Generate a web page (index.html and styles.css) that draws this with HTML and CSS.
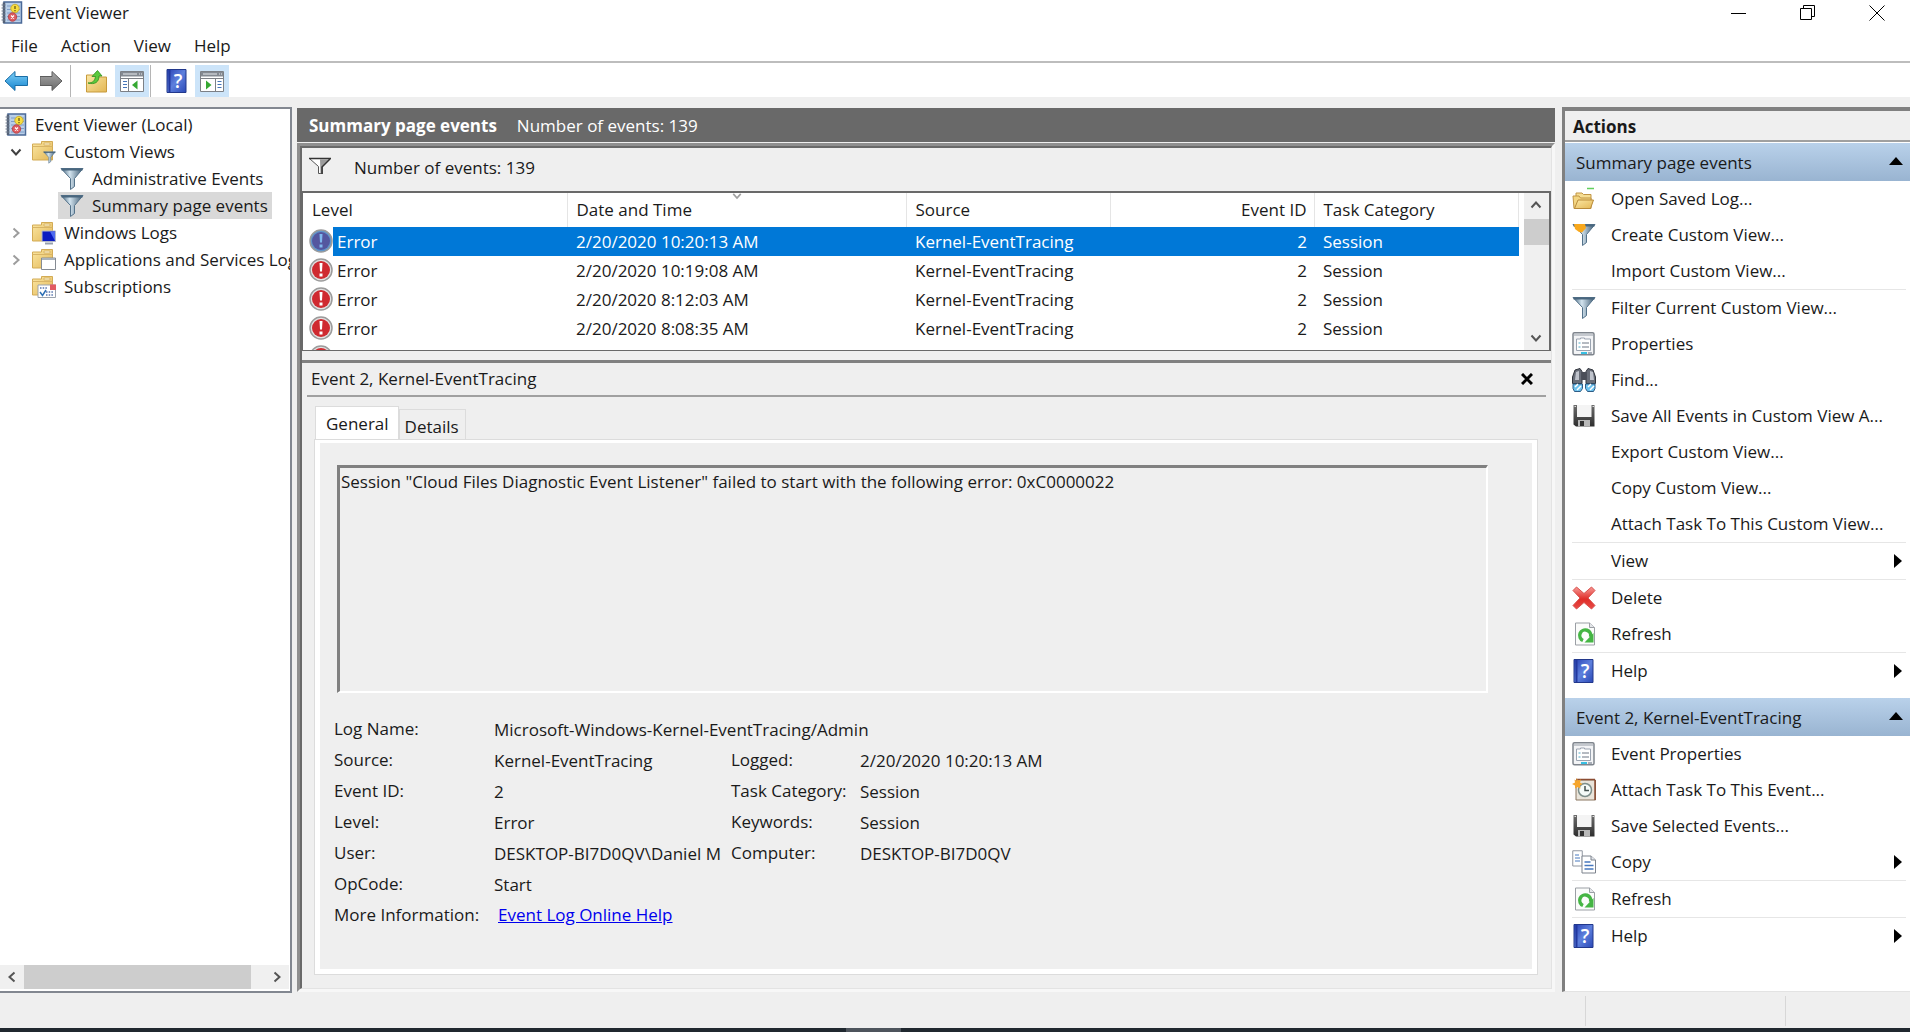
FILE: index.html
```html
<!DOCTYPE html>
<html lang="en">
<head>
    <meta charset="UTF-8">
    <meta name="viewport" content="width=device-width, initial-scale=1.0">
    <title>Event Viewer</title>
    <link rel="stylesheet" href="styles.css">
</head>
<body>
    <!-- icon sprite -->
    <svg class="sprite" aria-hidden="true">
        <defs>
            <linearGradient id="gFunnel" x1="0" y1="0" x2="1" y2="0">
                <stop offset="0" stop-color="#3f5f78"/><stop offset=".4" stop-color="#d3e4ef"/><stop offset="1" stop-color="#3b5870"/>
            </linearGradient>
            <linearGradient id="gBlue" x1="0" y1="0" x2="0" y2="1">
                <stop offset="0" stop-color="#7fd0f7"/><stop offset="1" stop-color="#1484cf"/>
            </linearGradient>
            <linearGradient id="gGray" x1="0" y1="0" x2="0" y2="1">
                <stop offset="0" stop-color="#a8a8a8"/><stop offset="1" stop-color="#6a6a6a"/>
            </linearGradient>
            <linearGradient id="gFolder" x1="0" y1="0" x2="1" y2="1">
                <stop offset="0" stop-color="#fbe7a4"/><stop offset="1" stop-color="#e3b755"/>
            </linearGradient>
            <linearGradient id="gBook" x1="0" y1="0" x2="1" y2="1">
                <stop offset="0" stop-color="#2740b4"/><stop offset=".5" stop-color="#5e80dd"/><stop offset="1" stop-color="#2a48b6"/>
            </linearGradient>
            <linearGradient id="gRed" x1="0" y1="0" x2="0" y2="1">
                <stop offset="0" stop-color="#f79a96"/><stop offset=".55" stop-color="#e02c28"/><stop offset="1" stop-color="#e84c48"/>
            </linearGradient>
            <linearGradient id="gSave" x1="0" y1="0" x2="0" y2="1">
                <stop offset="0" stop-color="#6d6d6d"/><stop offset="1" stop-color="#2e2e2e"/>
            </linearGradient>
        </defs>
        <symbol id="i-app" viewBox="0 0 24 24">
            <path d="M4 1h17.500v21H4z" fill="#b9cfe8" stroke="#4b6a98" stroke-width="1.500"/>
            <path d="M7 5h13M7 8.500h13M7 12h13M7 15.500h13M7 19h13" stroke="#7d9cc8"/>
            <path d="M4 1.500v20.500" stroke="#536077" stroke-width="2.500"/>
            <path d="M1.500 4h4M1.500 7h4M1.500 10h4M1.500 13h4M1.500 16h4M1.500 19h4" stroke="#6f7a8c"/>
            <circle cx="15" cy="7.500" r="4.200" fill="#f7dd3f" stroke="#c9ae35"/>
            <path d="M15 5v3M15 9v1.200" stroke="#6b5a10" stroke-width="1.300"/>
            <circle cx="12.500" cy="16" r="4.200" fill="#dc5b60" stroke="#b9484e"/>
            <path d="M11 14.500l3 3M14 14.500l-3 3" stroke="#fff" stroke-width="1.300"/>
        </symbol>
        <symbol id="i-back" viewBox="0 0 24 24">
            <path d="M0 12L10 2.500v5h12.500v9H10v5z" fill="url(#gBlue)" stroke="#1b6ea6" stroke-linejoin="round"/>
        </symbol>
        <symbol id="i-forward" viewBox="0 0 24 24">
            <path d="M22 12L12 2.500v5H0v9h12v5z" fill="url(#gGray)" stroke="#5d5d5d" stroke-linejoin="round"/>
        </symbol>
        <symbol id="i-up" viewBox="0 0 24 24">
            <path d="M1.500 6h8l2 2h10v15h-20z" fill="url(#gFolder)" stroke="#c79a3c"/>
            <path d="M3 14c5 0 7-2.500 7.500-6.500H7L12.500 1.500 17 7h-3c0 6-4 9-11 7z" fill="#5cc93d" stroke="#2d8f1d" stroke-width=".8"/>
        </symbol>
        <symbol id="i-panel-left" viewBox="0 0 24 24">
            <path d="M.500 2.500h23v20h-23z" fill="#fff" stroke="#7c8086"/>
            <path d="M1 3h22v4.500H1z" fill="#848a92"/>
            <path d="M3 5h14M19 5h1M21 5h1" stroke="#e8ebee"/>
            <path d="M1 9.500h22M8.500 9.500v13" stroke="#7c8086"/>
            <path d="M3 12.500h4M3 15.500h4M3 18.500h4" stroke="#4675b8"/>
            <path d="M17.500 11.500v9L12 16z" fill="#35a832"/>
        </symbol>
        <symbol id="i-panel-right" viewBox="0 0 24 24">
            <path d="M.500 2.500h23v20h-23z" fill="#fff" stroke="#7c8086"/>
            <path d="M1 3h22v4.500H1z" fill="#848a92"/>
            <path d="M3 5h14M19 5h1M21 5h1" stroke="#e8ebee"/>
            <path d="M1 9.500h22M15.500 9.500v13" stroke="#7c8086"/>
            <path d="M17.500 12.500h4M17.500 15.500h4M17.500 18.500h4" stroke="#4675b8"/>
            <path d="M6 11.500v9L11.500 16z" fill="#35a832"/>
        </symbol>
        <symbol id="i-help" viewBox="0 0 24 24">
            <path d="M2 .500h19v23H2z" fill="url(#gBook)" stroke="#22388c"/>
            <path d="M4.500 1v22" stroke="#22389f" stroke-width="2"/>
            <text x="13" y="18.500" text-anchor="middle" class="help-mark">?</text>
        </symbol>
        <symbol id="i-funnel" viewBox="0 0 24 24">
            <path d="M1 1.500h22l-8.500 10v8l-4 3v-11z" fill="url(#gFunnel)" stroke="#54728a" stroke-linejoin="round"/>
            <path d="M1.500 2.500h21" stroke="#49667e" stroke-width="2"/>
        </symbol>
        <symbol id="i-funnel-new" viewBox="0 0 24 24">
            <use href="#i-funnel"/>
            <path d="M2 1h11l1 4-4 4.500-3-.500-4-3z" fill="#f8a81d"/>
        </symbol>
        <symbol id="i-funnel-line" viewBox="0 0 24 24">
            <path d="M1.500 2.500h21l-8 8v7h-4v-7z" fill="#fff" stroke="#555" stroke-linejoin="round"/>
            <path d="M12 3.500h9l-6.500 6.500V17.500h-2z" fill="#9b9b9b"/>
            <path d="M1 2.500h22M22 3l-8 8V18" fill="none" stroke="#333" stroke-width="1.500"/>
        </symbol>
        <symbol id="i-folder" viewBox="0 0 24 24">
            <path d="M.500 4h9V1.500h11V20H.500z" fill="url(#gFolder)" stroke="#d3ab55"/>
            <path d="M12 3h6v2h-6zM.500 6.500h20" fill="#fff8dc" stroke="#d8b466"/>
        </symbol>
        <symbol id="i-folder-filter" viewBox="0 0 24 24">
            <use href="#i-folder"/>
            <use href="#i-funnel" x="11" y="11" width="13" height="13"/>
        </symbol>
        <symbol id="i-folder-windows" viewBox="0 0 24 24">
            <use href="#i-folder"/>
            <path d="M10 10h13.500v10.500H10z" fill="#0c1bc0" stroke="#b3b9c8"/>
            <path d="M18 10.500h5v9.500z" fill="#4f6bf0"/>
            <path d="M13 22.500h8" stroke="#97a0ad" stroke-width="2"/>
        </symbol>
        <symbol id="i-folder-apps" viewBox="0 0 24 24">
            <use href="#i-folder"/>
            <path d="M9.500 10h14v11.500h-14z" fill="#fff" stroke="#858b93"/>
            <path d="M10 11h13" stroke="#a9b2bd" stroke-width="2"/>
        </symbol>
        <symbol id="i-folder-subs" viewBox="0 0 24 24">
            <use href="#i-folder"/>
            <path d="M6 10h17.500v12.500H6z" fill="#fff" stroke="#9ba3ae"/>
            <path d="M18 9.500h6V15h-6z" fill="#e25b62"/>
            <path d="M14 17h7M14 20h7M8 13h8" stroke="#5774ae" stroke-width="1.500" stroke-dasharray="1.500 1.200"/>
            <path d="M8 17l2.500 3.500L14 15" fill="none" stroke="#2c6fb5" stroke-width="1.500"/>
        </symbol>
        <symbol id="i-error" viewBox="0 0 24 24">
            <circle class="error-rim" cx="12" cy="12" r="11" stroke-width="1.500"/>
            <circle class="error-disc" cx="12" cy="12" r="9"/>
            <path class="error-mark" d="M10.500 5h3l-.500 8.500h-2zM10.500 15.500h3v3h-3z"/>
        </symbol>
        <symbol id="i-open" viewBox="0 0 24 24">
            <path d="M15 1.500h7" stroke="#62cf5d" stroke-width="1.500"/>
            <path d="M4 12V6h6l1.500 1.500H19V19H4z" fill="#f6dd92" stroke="#c19545"/>
            <path d="M1 9h6l1.500 2H19v10.500H2z" fill="#f3d682" stroke="#c19545"/>
            <path d="M2.500 21.500L6 13h15.500l-3 8.500z" fill="url(#gFolder)" stroke="#b98b3a"/>
        </symbol>
        <symbol id="i-properties" viewBox="0 0 24 24">
            <rect x="1" y=".750" width="21" height="22" rx="1.500" fill="#f3f4f6" stroke="#7f858d" stroke-width="1.500"/>
            <path d="M2 3h19" stroke="#c4c8ce" stroke-width="2"/>
            <path d="M4.500 7h4v-1h4v1h6v11.500h-14z" fill="#fff" stroke="#9aa3b0"/>
            <path d="M6.500 11h2M6.500 15h2" stroke="#4ba7c4"/>
            <path d="M10 11h7M10 15h7" stroke="#6c7684"/>
            <path d="M9 21h6" stroke="#37bfe3" stroke-width="2"/>
            <path d="M16 21h4" stroke="#a9afb8" stroke-width="2"/>
        </symbol>
        <symbol id="i-find" viewBox="0 0 24 24">
            <path d="M3 2l5-1.500 2 3v12H.500V9zM21 2l-5-1.500-2 3v12h9.500V9z" fill="#686d78" stroke="#30343c"/>
            <path d="M4 4l3-1v9H3zM18 3l3 1 1 8h-4z" fill="#bfc3cc"/>
            <path d="M10 4h4v8h-4z" fill="#4a4e58"/>
            <path d="M1 16h9.500v4.500l-2 3h-6l-1.500-3zM13.500 16H23v4.500l-1.500 3h-6l-2-3z" fill="#6cc2ee" stroke="#2f5c85"/>
            <path d="M3 19l3-3M5 22l4-4M16 19l3-3M18 22l4-4" stroke="#fff" stroke-width="1.500"/>
        </symbol>
        <symbol id="i-save" viewBox="0 0 24 24">
            <path d="M1.500 1h21v21.500H4l-2.500-2z" fill="url(#gSave)"/>
            <path d="M5 1h14.500v12H5z" fill="#f4f4f4"/>
            <path d="M6 16h12v6.500H6z" fill="#b9b9b9"/>
            <path d="M8 17h4v5H8z" fill="#333"/>
            <path d="M2.500 2.500h1.500M20.500 2.500h1.500" stroke="#ddd"/>
        </symbol>
        <symbol id="i-delete" viewBox="0 0 24 24">
            <path d="M4.500 1L12 7.500 19.500 1 23 4.500 16 12l7 7.500-3.500 3.500L12 16.500 4.500 23 1 19.500 8 12 1 4.500z" fill="url(#gRed)" stroke="#d8504c" stroke-linejoin="round"/>
        </symbol>
        <symbol id="i-refresh" viewBox="0 0 24 24">
            <path d="M3.500 1h14l5 4.500V23h-19z" fill="#fbfcfb" stroke="#9b9fa5"/>
            <path d="M17.500 1v4.500h5" fill="#e4e6e9" stroke="#9b9fa5"/>
            <path d="M11 18.500a5.500 5.500 0 1 1 7.500-3.500" fill="none" stroke="#45b544" stroke-width="3.500"/>
            <path d="M21.500 11v9.500h-9z" fill="#45b544"/>
        </symbol>
        <symbol id="i-task" viewBox="0 0 24 24">
            <path d="M4 2h19.500v20H4z" fill="#e9e4da" stroke="#8a7660"/>
            <path d="M4 1.500h19M23 2v20" stroke="#8b4c33" stroke-width="1.500"/>
            <circle cx="13" cy="12" r="6.500" fill="#f5fbf8" stroke="#7d8f8b" stroke-width="1.500"/>
            <path d="M13 8v4.500h4" fill="none" stroke="#44524f" stroke-width="1.500"/>
            <path d="M4.500 0l1.500 2.500L9 1.500 8 4.500l2.500 1.500L8 7.500l.500 3L5.500 9 3 10.500V7.500L0 6l3-1.500-.500-3L4.500 3z" fill="#f6a62c"/>
        </symbol>
        <symbol id="i-copy" viewBox="0 0 24 24">
            <path d="M.750.750h9.500V16H.750z" fill="#fff" stroke="#9096a0"/>
            <path d="M3 5h4M3 8h5M3 11h5" stroke="#4778be"/>
            <path d="M10 6h9l4.500 4v13H10z" fill="#fff" stroke="#7d838d"/>
            <path d="M19 6v4h4.500" fill="#e4e7ec" stroke="#7d838d"/>
            <path d="M12.500 12h6M12.500 15.500h9M12.500 19h9" stroke="#4778be" stroke-width="1.300"/>
        </symbol>
        <symbol id="i-chevron" viewBox="0 0 12 12">
            <path d="M1.500 3.500L6 8.500l4.500-5" fill="none" stroke="currentColor" stroke-width="2"/>
        </symbol>
    </svg>

    <header class="titlebar">
        <svg class="icon"><use href="#i-app"/></svg>
        <h1 class="title">Event Viewer</h1>
        <div class="window-buttons">
            <button class="window-btn" aria-label="Minimize"><svg viewBox="0 0 16 16"><path d="M0 8.500h15"/></svg></button>
            <button class="window-btn" aria-label="Restore"><svg viewBox="0 0 16 16"><path d="M.500 3.500h11v11H.500zM3.500 3.500v-3h11v11h-3"/></svg></button>
            <button class="window-btn" aria-label="Close"><svg viewBox="0 0 16 16"><path d="M.500.500l15 15M15.500.500l-15 15"/></svg></button>
        </div>
    </header>

    <nav class="menubar">
        <button>File</button>
        <button>Action</button>
        <button>View</button>
        <button>Help</button>
    </nav>

    <div class="toolbar">
        <button class="tool" aria-label="Back"><svg class="icon"><use href="#i-back"/></svg></button>
        <button class="tool" aria-label="Forward"><svg class="icon"><use href="#i-forward"/></svg></button>
        <span class="tool-sep"></span>
        <button class="tool" aria-label="Up one level"><svg class="icon"><use href="#i-up"/></svg></button>
        <button class="tool pressed" aria-label="Show console tree"><svg class="icon"><use href="#i-panel-left"/></svg></button>
        <span class="tool-sep"></span>
        <button class="tool" aria-label="Help"><svg class="icon"><use href="#i-help"/></svg></button>
        <button class="tool pressed" aria-label="Show action pane"><svg class="icon"><use href="#i-panel-right"/></svg></button>
    </div>

    <div class="workspace">
        <aside class="tree-pane">
            <ul class="tree">
                <li class="node root"><svg class="icon"><use href="#i-app"/></svg><span>Event Viewer (Local)</span></li>
                <li class="node"><button class="expander open" aria-label="Collapse"><svg><use href="#i-chevron"/></svg></button><svg class="icon"><use href="#i-folder-filter"/></svg><span>Custom Views</span></li>
                <li class="node leaf"><svg class="icon"><use href="#i-funnel"/></svg><span>Administrative Events</span></li>
                <li class="node leaf selected"><svg class="icon"><use href="#i-funnel"/></svg><span>Summary page events</span></li>
                <li class="node"><button class="expander" aria-label="Expand"><svg><use href="#i-chevron"/></svg></button><svg class="icon"><use href="#i-folder-windows"/></svg><span>Windows Logs</span></li>
                <li class="node"><button class="expander" aria-label="Expand"><svg><use href="#i-chevron"/></svg></button><svg class="icon"><use href="#i-folder-apps"/></svg><span>Applications and Services Logs</span></li>
                <li class="node"><span class="expander"></span><svg class="icon"><use href="#i-folder-subs"/></svg><span>Subscriptions</span></li>
            </ul>
            <div class="scroll-x">
                <button aria-label="Scroll left"><svg class="left"><use href="#i-chevron"/></svg></button>
                <div class="track"><div class="thumb"></div></div>
                <button aria-label="Scroll right"><svg class="right"><use href="#i-chevron"/></svg></button>
            </div>
        </aside>

        <main class="main-pane">
            <div class="pane-header">
                <h2>Summary page events</h2>
                <span>Number of events: 139</span>
            </div>
            <div class="frame">
                <div class="frame-inner">
                    <div class="filter-bar">
                        <svg class="icon"><use href="#i-funnel-line"/></svg>
                        <span>Number of events: 139</span>
                    </div>
                    <div class="event-list">
                        <div class="list-view">
                            <table class="events">
                                <colgroup>
                                    <col class="col-level">
                                    <col class="col-date">
                                    <col class="col-source">
                                    <col class="col-id">
                                    <col class="col-task">
                                </colgroup>
                                <thead>
                                    <tr>
                                        <th>Level</th>
                                        <th class="sorted">Date and Time<svg class="sort-mark"><use href="#i-chevron"/></svg></th>
                                        <th>Source</th>
                                        <th class="num">Event ID</th>
                                        <th>Task Category</th>
                                    </tr>
                                </thead>
                                <tbody>
                                    <tr class="selected">
                                        <td class="level"><svg class="icon"><use href="#i-error"/></svg><span>Error</span></td>
                                        <td>2/20/2020 10:20:13 AM</td><td>Kernel-EventTracing</td><td class="num">2</td><td>Session</td>
                                    </tr>
                                    <tr>
                                        <td class="level"><svg class="icon"><use href="#i-error"/></svg><span>Error</span></td>
                                        <td>2/20/2020 10:19:08 AM</td><td>Kernel-EventTracing</td><td class="num">2</td><td>Session</td>
                                    </tr>
                                    <tr>
                                        <td class="level"><svg class="icon"><use href="#i-error"/></svg><span>Error</span></td>
                                        <td>2/20/2020 8:12:03 AM</td><td>Kernel-EventTracing</td><td class="num">2</td><td>Session</td>
                                    </tr>
                                    <tr>
                                        <td class="level"><svg class="icon"><use href="#i-error"/></svg><span>Error</span></td>
                                        <td>2/20/2020 8:08:35 AM</td><td>Kernel-EventTracing</td><td class="num">2</td><td>Session</td>
                                    </tr>
                                    <tr>
                                        <td class="level" colspan="5"><svg class="icon"><use href="#i-error"/></svg></td>
                                    </tr>
                                </tbody>
                            </table>
                        </div>
                        <div class="scroll-y">
                            <button aria-label="Scroll up"><svg class="up"><use href="#i-chevron"/></svg></button>
                            <div class="track"><div class="thumb"></div></div>
                            <button aria-label="Scroll down"><svg><use href="#i-chevron"/></svg></button>
                        </div>
                    </div>

                    <section class="preview">
                        <div class="preview-title">
                            <h3>Event 2, Kernel-EventTracing</h3>
                            <button class="close-btn" aria-label="Close preview"><svg viewBox="0 0 12 12"><path d="M1 1l10 10M11 1L1 11"/></svg></button>
                        </div>
                        <div class="tabs" role="tablist">
                            <button class="tab active" role="tab" aria-selected="true">General</button>
                            <button class="tab" role="tab" aria-selected="false">Details</button>
                        </div>
                        <div class="tab-page" role="tabpanel">
                            <textarea class="message" aria-label="Event description" readonly>Session "Cloud Files Diagnostic Event Listener" failed to start with the following error: 0xC0000022</textarea>
                            <div class="fields">
                                <span>Log Name:</span><span class="value wide">Microsoft-Windows-Kernel-EventTracing/Admin</span>
                                <span>Source:</span><span class="value">Kernel-EventTracing</span>
                                <span>Logged:</span><span class="value">2/20/2020 10:20:13 AM</span>
                                <span>Event ID:</span><span class="value">2</span>
                                <span>Task Category:</span><span class="value">Session</span>
                                <span>Level:</span><span class="value">Error</span>
                                <span>Keywords:</span><span class="value">Session</span>
                                <span>User:</span><span class="value">DESKTOP-BI7D0QV\Daniel M</span>
                                <span>Computer:</span><span class="value">DESKTOP-BI7D0QV</span>
                                <span>OpCode:</span><span class="value wide">Start</span>
                                <span>More Information:</span><a class="wide" href="#">Event Log Online Help</a>
                            </div>
                        </div>
                    </section>
                </div>
            </div>
        </main>

        <aside class="actions-pane">
            <h2 class="actions-title">Actions</h2>
            <section class="group">
                <button class="group-head">Summary page events<span class="tri-up"></span></button>
                <ul class="actions">
                    <li><button><svg class="icon"><use href="#i-open"/></svg>Open Saved Log...</button></li>
                    <li><button><svg class="icon"><use href="#i-funnel-new"/></svg>Create Custom View...</button></li>
                    <li><button><span class="icon"></span>Import Custom View...</button></li>
                    <li class="divided"><button><svg class="icon"><use href="#i-funnel"/></svg>Filter Current Custom View...</button></li>
                    <li><button><svg class="icon"><use href="#i-properties"/></svg>Properties</button></li>
                    <li><button><svg class="icon"><use href="#i-find"/></svg>Find...</button></li>
                    <li><button><svg class="icon"><use href="#i-save"/></svg>Save All Events in Custom View A...</button></li>
                    <li><button><span class="icon"></span>Export Custom View...</button></li>
                    <li><button><span class="icon"></span>Copy Custom View...</button></li>
                    <li><button><span class="icon"></span>Attach Task To This Custom View...</button></li>
                    <li class="divided"><button><span class="icon"></span>View<span class="tri-right"></span></button></li>
                    <li class="divided"><button><svg class="icon"><use href="#i-delete"/></svg>Delete</button></li>
                    <li><button><svg class="icon"><use href="#i-refresh"/></svg>Refresh</button></li>
                    <li class="divided"><button><svg class="icon"><use href="#i-help"/></svg>Help<span class="tri-right"></span></button></li>
                </ul>
            </section>
            <section class="group">
                <button class="group-head">Event 2, Kernel-EventTracing<span class="tri-up"></span></button>
                <ul class="actions">
                    <li><button><svg class="icon"><use href="#i-properties"/></svg>Event Properties</button></li>
                    <li><button><svg class="icon"><use href="#i-task"/></svg>Attach Task To This Event...</button></li>
                    <li><button><svg class="icon"><use href="#i-save"/></svg>Save Selected Events...</button></li>
                    <li><button><svg class="icon"><use href="#i-copy"/></svg>Copy<span class="tri-right"></span></button></li>
                    <li class="divided"><button><svg class="icon"><use href="#i-refresh"/></svg>Refresh</button></li>
                    <li class="divided"><button><svg class="icon"><use href="#i-help"/></svg>Help<span class="tri-right"></span></button></li>
                </ul>
            </section>
        </aside>
    </div>

    <footer class="statusbar">
        <span></span>
        <span></span>
        <span></span>
    </footer>
    <div class="taskbar"><span></span></div>
</body>
</html>
```

FILE: styles.css
```css
* {
    box-sizing: border-box;
}
body {
    margin: 0;
    min-height: 100vh;
    display: flex;
    flex-direction: column;
    background: #efefef;
    color: #1a1a1a;
    font-family: "Open Sans", "Noto Sans", sans-serif;
    font-size: 17px;
    line-height: 24px;
}
button {
    font: inherit;
    color: inherit;
    background: none;
    border: none;
    padding: 0;
    margin: 0;
}
h1, h2, h3, ul {
    margin: 0;
    padding: 0;
    font-size: inherit;
    font-weight: 400;
    list-style: none;
}
.sprite {
    position: absolute;
    width: 0;
    height: 0;
}
.icon {
    width: 24px;
    height: 24px;
    flex: none;
    display: block;
}
.help-mark {
    fill: #fff;
    font-size: 19px;
    font-weight: 600;
}

/* title bar, menu and toolbar */
.titlebar {
    height: 25px;
    display: flex;
    align-items: center;
    background: #fff;
}
.title {
    margin-left: 3px;
}
.window-buttons {
    margin-left: auto;
    display: flex;
    gap: 3px;
}
.window-btn {
    width: 66px;
    height: 20px;
    display: grid;
    place-items: center;
}
.window-btn svg {
    width: 16px;
    height: 16px;
    fill: none;
    stroke: #000;
}
.menubar {
    height: 38px;
    padding: 6px 11px 0;
    display: flex;
    align-items: center;
    gap: 23px;
    background: #fff;
    border-bottom: 2px solid #bdbdbd;
}
.toolbar {
    height: 34px;
    padding-top: 2px;
    display: flex;
    align-items: stretch;
    gap: 1px;
    background: #fff;
}
.tool {
    width: 34px;
    display: grid;
    place-items: center;
}
.tool.pressed {
    background: #cce4f9;
}
.tool-sep {
    width: 1px;
    margin-right: 8px;
    background: #b5b5b5;
}

/* three panes */
.workspace {
    flex: 1;
    padding-top: 10px;
    display: grid;
    grid-template-columns: 292px minmax(0, 1fr) 348px;
}
.tree-pane {
    display: flex;
    flex-direction: column;
    min-width: 0;
    margin-bottom: 1px;
    background: #fff;
    border: 2px solid #828790;
    border-left: none;
}
.tree {
    flex: 1;
    padding-top: 2px;
    overflow: hidden;
}
.node {
    height: 27px;
    padding-left: 8px;
    display: flex;
    align-items: center;
    gap: 8px;
    white-space: nowrap;
}
.node.root {
    padding-left: 4px;
    gap: 7px;
}
.node.leaf {
    width: fit-content;
    margin-left: 58px;
    padding: 0 4px 0 2px;
}
.node.selected {
    background: #d9d9d9;
}
.expander {
    width: 16px;
    height: 16px;
    flex: none;
    display: grid;
    place-items: center;
    color: #9d9d9d;
}
.expander svg, .scroll-x svg, .scroll-y svg {
    width: 12px;
    height: 12px;
}
.expander svg {
    transform: rotate(-90deg);
}
.expander.open svg {
    transform: none;
}
.expander.open {
    color: #404040;
}
.scroll-x, .scroll-y {
    display: flex;
    color: #555;
    background: #f0f0f0;
}
.scroll-x {
    height: 24px;
    margin: 0 1px 2px 0;
}
.scroll-x button, .scroll-y button {
    width: 24px;
    height: 24px;
    flex: none;
    display: grid;
    place-items: center;
}
.track {
    flex: 1;
}
.thumb {
    background: #cdcdcd;
}
.scroll-x .thumb {
    width: 94%;
    height: 24px;
}
.left {
    transform: rotate(90deg);
}
.right {
    transform: rotate(-90deg);
}
.up {
    transform: rotate(180deg);
}

.main-pane {
    margin: 1px 7px 2px 5px;
    display: flex;
    flex-direction: column;
    min-width: 0;
}
.pane-header {
    height: 34px;
    padding: 2px 0 0 12px;
    display: flex;
    align-items: center;
    gap: 20px;
    background: #696969;
    color: #fff;
}
.pane-header h2, .actions-title {
    font-weight: 700;
}
.frame {
    flex: 1;
    margin-top: 1px;
    display: flex;
    border: 3px solid #8f8f8f;
    border-right-color: #f7f7f7;
    border-bottom-color: #f7f7f7;
}
.frame-inner {
    flex: 1;
    min-width: 0;
    display: flex;
    flex-direction: column;
    border: 2px solid #696969;
    border-right: 1px solid #e3e3e3;
    border-bottom: 1px solid #e3e3e3;
}
.filter-bar {
    height: 43px;
    padding: 0 0 4px 6px;
    display: flex;
    align-items: center;
    gap: 22px;
}

/* event table */
.event-list {
    height: 160px;
    display: flex;
    border: 2px solid #696969;
    border-left-width: 1px;
    border-bottom-width: 1px;
    background: #fff;
    overflow: hidden;
}
.list-view {
    flex: 1;
    min-width: 0;
    overflow: hidden;
}
.events {
    width: calc(100% - 5px);
    table-layout: fixed;
    border-collapse: collapse;
}
.col-level {
    width: 264px;
}
.col-date {
    width: 339px;
}
.col-source, .col-id {
    width: 204px;
}
.events th {
    height: 34px;
    padding: 0 9px;
    position: relative;
    border-right: 1px solid #e5e5e5;
    font-weight: 400;
    text-align: left;
}
.events td {
    height: 29px;
    padding: 0 9px;
    white-space: nowrap;
}
.events .num {
    padding-right: 7px;
    text-align: right;
}
.sort-mark {
    position: absolute;
    top: -2px;
    left: calc(50% - 6px);
    width: 12px;
    height: 10px;
    color: #a0a0a0;
}
.events td.level {
    padding: 0 0 0 6px;
    vertical-align: top;
}
.level .icon {
    float: left;
    margin-top: 2px;
}
.level span {
    display: block;
    height: 29px;
    margin-left: 24px;
    padding-left: 4px;
    line-height: 29px;
}
.error-rim {
    fill: var(--rim, #e3e3e3);
    stroke: #9b9b9b;
}
.error-disc {
    fill: var(--disc, #cf2a30);
}
.error-mark {
    fill: var(--mark, #fff);
}
.events tr.selected {
    --rim: #5f95cc;
    --disc: #54579f;
    --mark: #7fb8ee;
}
.events .selected td:not(.level), .events .selected .level span {
    background: #0078d7;
    color: #fff;
}
.scroll-y {
    width: 25px;
    flex-direction: column;
}
.scroll-y .thumb {
    height: 26px;
    margin-top: 2px;
}

/* preview of the selected event */
.preview {
    flex: 1;
    margin-top: 9px;
    padding: 0 14px 14px 13px;
    display: flex;
    flex-direction: column;
    border-top: 3px solid #808080;
}
.preview-title {
    height: 34px;
    margin: 0 -9px 0 -8px;
    padding: 0 13px 0 4px;
    display: flex;
    align-items: center;
    justify-content: space-between;
    border-bottom: 2px solid #a0a0a0;
}
.close-btn {
    width: 12px;
    height: 24px;
    display: grid;
    place-items: center;
}
.close-btn svg {
    width: 12px;
    height: 12px;
    stroke: #000;
    stroke-width: 3;
}
.tabs {
    height: 43px;
    display: flex;
    align-items: flex-end;
}
.tab {
    height: 31px;
    padding: 3px 6px 0 5px;
    border: 1px solid #dcdcdc;
    border-bottom: none;
}
.tab.active {
    height: 34px;
    padding: 0 9px 0 10px;
    background: #fff;
}
.tab-page {
    flex: 1;
    padding: 22px 44px 0 13px;
    display: flex;
    flex-direction: column;
    border: 5px solid #fff;
    border-top-width: 3px;
    outline: 1px solid #dcdcdc;
}
.message {
    height: 228px;
    margin-left: 4px;
    padding: 2px 1px;
    resize: none;
    outline: none;
    background: #efefef;
    border: 3px solid #808080;
    border-right: 2px solid #fff;
    border-bottom: 2px solid #fff;
    font: inherit;
    color: inherit;
}
.fields {
    padding: 20px 0 0 1px;
    display: grid;
    grid-template-columns: 160px 237px 129px 1fr;
    grid-auto-rows: 31px;
    white-space: nowrap;
}
.fields span, .fields a {
    line-height: 32px;
}
.fields .value {
    padding-top: 1px;
}
.fields .wide {
    grid-column: span 3;
}
.fields a {
    padding-left: 4px;
    color: #0000ee;
}

/* actions */
.actions-pane {
    margin-bottom: 2px;
    background: #fff;
    border-top: 4px solid #808080;
    border-left: 3px solid #808080;
    border-bottom: 1px solid #e3e3e3;
}
.actions-title {
    height: 31px;
    padding: 4px 8px 0;
    background: #efefef;
    border-bottom: 2px solid #a0a0a0;
}
.group {
    padding-top: 1px;
}
.group + .group {
    padding-top: 9px;
}
.group-head {
    width: 100%;
    height: 38px;
    padding: 2px 7px 0 11px;
    display: flex;
    align-items: center;
    justify-content: space-between;
    background: linear-gradient(#b9d1ea, #99b4d1);
}
.tri-up {
    margin-bottom: 4px;
    border: 7px solid transparent;
    border-top: none;
    border-bottom: 8px solid #000;
}
.actions {
    padding: 0 4px 0 7px;
}
.actions button {
    width: 100%;
    height: 36px;
    display: flex;
    align-items: center;
    gap: 15px;
    white-space: nowrap;
}
.actions .divided {
    border-top: 1px solid #e6e6e6;
}
.tri-right {
    margin: 0 4px 0 auto;
    border: 7px solid transparent;
    border-right: none;
    border-left: 8px solid #000;
}

/* status bar and the strip of taskbar under the window */
.statusbar {
    height: 34px;
    padding: 2px 0;
    display: grid;
    grid-template-columns: 1fr 200px 125px;
}
.statusbar span + span {
    border-left: 1px solid #d7d7d7;
}
.taskbar {
    height: 4px;
    background: #20282f;
}
.taskbar span {
    display: block;
    width: 55px;
    height: 4px;
    margin-left: 44.3%;
    background: #4d545c;
}
```
